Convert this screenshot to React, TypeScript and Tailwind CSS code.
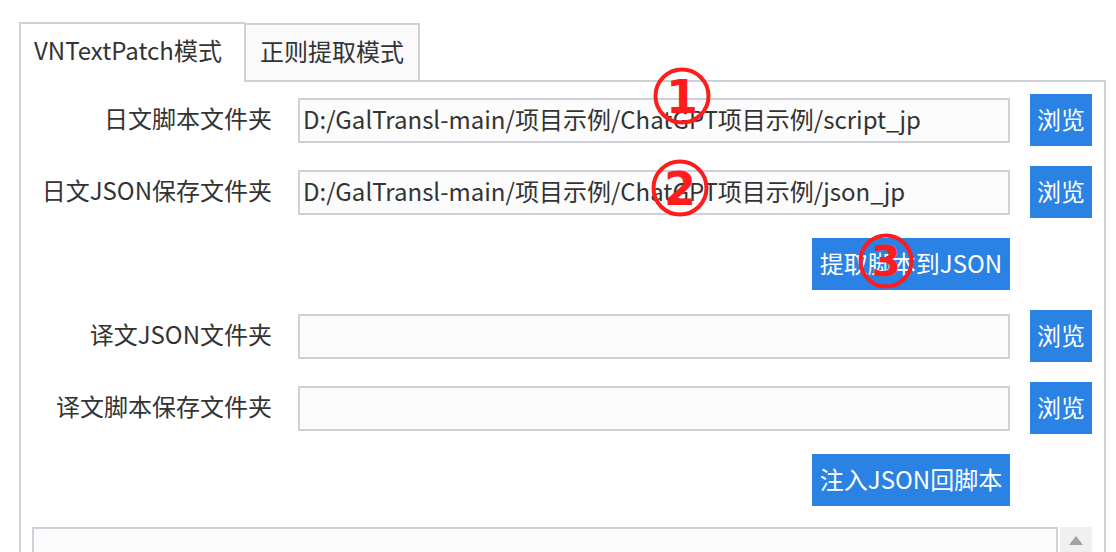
import React from "react";

const FONT = { fontFamily: '"Noto Sans CJK SC", "Noto Sans", sans-serif' };

function Circled({ n, x, y, size = 58, fs = 46 }: { n: string; x: number; y: number; size?: number; fs?: number }) {
  return (
    <svg
      className="absolute pointer-events-none"
      style={{ left: x - size / 2, top: y - size / 2 }}
      width={size}
      height={size}
      viewBox={`0 0 ${size} ${size}`}
    >
      <circle cx={size / 2} cy={size / 2} r={size / 2 - 2.5} fill="none" stroke="#ff1c1c" strokeWidth="4" />
      <text
        x={size / 2}
        y={size / 2 + fs * 0.36}
        textAnchor="middle"
        fontSize={fs}
        fontWeight="bold"
        fill="#ff1c1c"
        fontFamily='"DejaVu Sans", sans-serif'
      >
        {n}
      </text>
    </svg>
  );
}

function Browse() {
  return (
    <button className="w-[62px] h-[52px] bg-[#2a82e4] text-white text-[24px] leading-none flex items-center justify-center pb-[3px] shrink-0">
      浏览
    </button>
  );
}

function Row({ label, value }: { label: string; value: string }) {
  return (
    <div className="flex items-center h-[52px]">
      <div className="w-[240px] text-right text-[24px] leading-none text-[#333] shrink-0 pb-[4px]">{label}</div>
      <div className="ml-[26px] w-[712px] h-[45px] border-2 border-[#ced2d8] bg-[#fcfcfc] flex items-center pl-[3px] pb-[3px] text-[24px] leading-none text-[#333] whitespace-nowrap overflow-hidden shrink-0">
        {value}
      </div>
      <div className="ml-[20px]">
        <Browse />
      </div>
    </div>
  );
}

function ActionRow({ text }: { text: string }) {
  return (
    <div className="flex h-[52px]">
      <div className="w-[978px] flex justify-end">
        <button className="w-[198px] h-[52px] bg-[#2a82e4] text-white text-[24px] leading-none flex items-center justify-center pb-[3px]">
          {text}
        </button>
      </div>
    </div>
  );
}

export default function App() {
  return (
    <div className="w-[1116px] h-[552px] bg-white overflow-hidden relative pl-[19px] pt-[22px]" style={FONT}>
      <div className="w-[1087px]">
        <div className="flex h-[60px]">
          <div className="w-[227px] h-[60px] border-2 border-b-0 border-[#ced2d8] bg-white flex items-center pl-[13px] pb-[6px] text-[24px] leading-none text-[#333]">
            VNTextPatch模式
          </div>
          <div className="w-[174px] h-[59px] self-end border-t-2 border-r-2 border-b-2 border-[#ced2d8] bg-[#fafafa] flex items-center pl-[14px] pb-[3px] text-[24px] leading-none text-[#333]">
            正则提取模式
          </div>
          <div className="flex-1 border-b-2 border-[#ced2d8]" />
        </div>
        <div className="h-[480px] border-l-2 border-r-2 border-[#ced2d8] pl-[11px] pt-[12px] flex flex-col gap-[20px]">
          <Row label="日文脚本文件夹" value="D:/GalTransl-main/项目示例/ChatGPT项目示例/script_jp" />
          <Row label="日文JSON保存文件夹" value="D:/GalTransl-main/项目示例/ChatGPT项目示例/json_jp" />
          <ActionRow text="提取脚本到JSON" />
          <Row label="译文JSON文件夹" value="" />
          <Row label="译文脚本保存文件夹" value="" />
          <ActionRow text="注入JSON回脚本" />
          <div className="flex mt-[1px] h-[60px]">
            <div className="w-[1026px] border-2 border-[#ced2d8] bg-[#fcfcfc]" />
            <div className="ml-[2px] w-[32px] bg-[#f0f0f0] flex justify-center pt-[9px]">
              <svg width="14" height="9" viewBox="0 0 14 9">
                <polygon points="7,0 14,9 0,9" fill="#a3a3a3" />
              </svg>
            </div>
          </div>
        </div>
      </div>
      <Circled n="1" x={682} y={96} />
      <Circled n="2" x={680} y={188} />
      <Circled n="3" x={886} y={261} size={56} fs={42} />
    </div>
  );
}
